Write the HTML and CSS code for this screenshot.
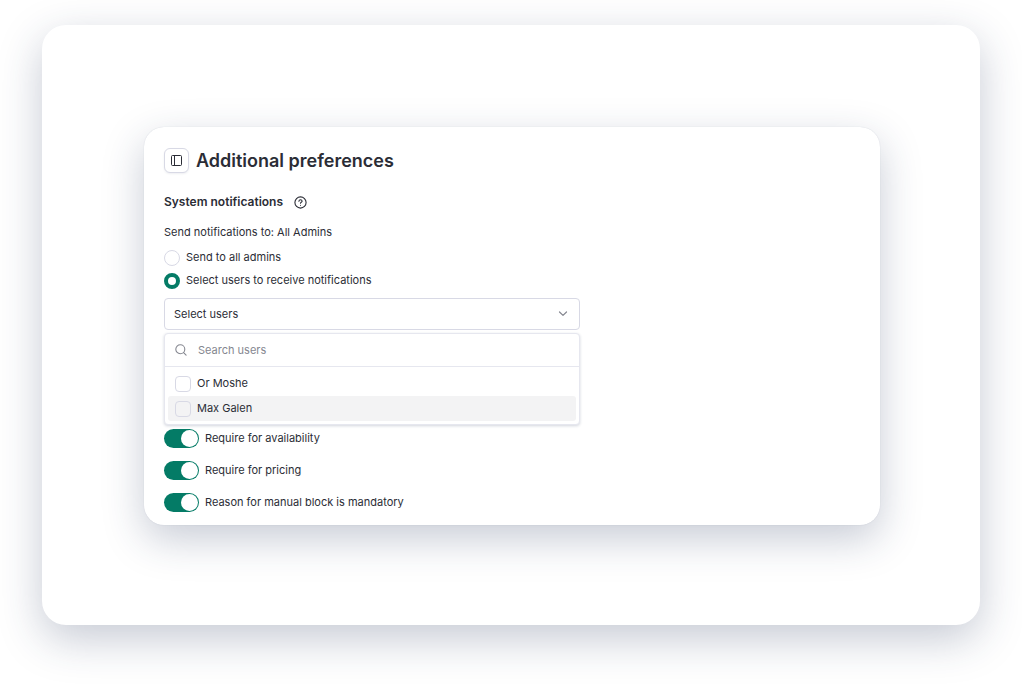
FILE: index.html
```html
<!DOCTYPE html>
<html lang="en">
<head>
<meta charset="utf-8">
<meta name="viewport" content="width=device-width, initial-scale=1">
<title>Additional preferences</title>
<link rel="stylesheet" href="styles.css">
</head>
<body>
<div class="stage">
  <main class="panel">
    <header class="panel-header">
      <button class="icon-button" type="button" aria-label="Toggle sidebar">
        <svg width="13" height="13" viewBox="0 0 13 13" fill="none" stroke="currentColor" stroke-width="1"><rect x="1.5" y="1.5" width="10" height="10" rx="1"/><path d="M4.5 1.5v10"/></svg>
      </button>
      <h1 class="title">Additional preferences</h1>
    </header>

    <div class="section-heading">
      <h2 class="subtitle">System notifications</h2>
      <svg class="help" width="13" height="13" viewBox="0 0 13 13" fill="none" stroke="currentColor" stroke-width="1.1" stroke-linecap="round" stroke-linejoin="round"><circle cx="6.5" cy="6.5" r="5.6"/><path d="M4.9 5.3c.1-1 .7-1.5 1.6-1.5s1.6.6 1.6 1.4c0 1-1.6 1.1-1.6 2M6.5 9.2v.1"/></svg>
    </div>

    <p class="summary">Send notifications to: All Admins</p>

    <div class="radio-list">
      <label class="choice"><input class="radio" type="radio" name="recipients"><span>Send to all admins</span></label>
      <label class="choice"><input class="radio" type="radio" name="recipients" checked><span>Select users to receive notifications</span></label>
    </div>

    <div class="picker">
      <div class="select-box">
        <select class="select" aria-label="Users"><option>Select users</option></select>
        <svg class="chevron" width="10" height="6" viewBox="0 0 10 6" fill="none" stroke="currentColor" stroke-width="1.2" stroke-linecap="round" stroke-linejoin="round"><path d="M1.5 1 5 4.4 8.5 1"/></svg>
      </div>
      <div class="menu">
        <div class="search">
          <svg width="12" height="12" viewBox="0 0 12 12" fill="none" stroke="currentColor" stroke-width="1.1" stroke-linecap="round"><circle cx="5.3" cy="5.3" r="4.5"/><path d="m8.6 8.6 2.5 2.5"/></svg>
          <input class="search-input" type="text" placeholder="Search users" aria-label="Search users">
        </div>
        <div class="options">
          <label class="option"><input class="checkbox" type="checkbox"><span>Or Moshe</span></label>
          <label class="option option-active"><input class="checkbox" type="checkbox"><span>Max Galen</span></label>
        </div>
      </div>
    </div>

    <div class="toggle-list">
      <label class="choice"><input class="toggle" type="checkbox" role="switch" checked><span>Require for availability</span></label>
      <label class="choice"><input class="toggle" type="checkbox" role="switch" checked><span>Require for pricing</span></label>
      <label class="choice"><input class="toggle" type="checkbox" role="switch" checked><span>Reason for manual block is mandatory</span></label>
    </div>
  </main>
</div>
</body>
</html>
```
FILE: styles.css
```css
* { box-sizing: border-box; }

:root {
  --ink: #2b2d36;
  --line: #d8d9e5;
  --green: #047b66;
}

body {
  margin: 0;
  padding: 25px 42px 59px;
  background: #fff;
  color: var(--ink);
  font: 11px/16px Inter, "Liberation Sans", sans-serif;
}

input, select, button { margin: 0; font: inherit; color: inherit; }

.stage {
  padding: 102px 100px 100px 102px;
  border-radius: 24px;
  background: #fff;
  box-shadow: 0 14px 44px rgba(35, 50, 90, 0.26);
}

.panel {
  padding: 21px 20px 13px;
  border-radius: 20px;
  background: #fff;
  box-shadow: 0 0 1px rgba(35, 50, 90, 0.2), 0 14px 40px rgba(35, 50, 90, 0.25);
}

.panel-header { display: flex; align-items: center; gap: 7px; }

.icon-button {
  display: grid;
  place-items: center;
  width: 25px;
  height: 25px;
  padding: 0;
  border: 1px solid var(--line);
  border-radius: 6px;
  background: #fff;
  box-shadow: 0 1px 2px rgba(35, 50, 90, 0.08);
}

.title { margin: 0; font-size: 18px; line-height: 24px; font-weight: 600; }

.section-heading { display: flex; align-items: center; gap: 11px; margin-top: 21px; }
.subtitle { margin: 0; font-size: 12px; line-height: 16px; font-weight: 600; }
.summary { margin: 14px 0 0; }

.radio-list { display: grid; gap: 7px; margin-top: 10px; }
.choice { display: flex; align-items: center; gap: 6px; line-height: 14px; }
.choice > span, .option > span { padding-bottom: 2px; }

.radio {
  appearance: none;
  width: 16px;
  height: 16px;
  border: 1px solid var(--line);
  border-radius: 50%;
  background: #fff;
}
.radio:checked { border: 4px solid var(--green); }

.picker { max-width: 416px; margin-top: 9px; }

.select-box { display: grid; align-items: center; }
.select-box > * { grid-area: 1 / 1; }
.select {
  appearance: none;
  width: 100%;
  height: 32px;
  padding: 0 32px 0 9px;
  border: 1px solid var(--line);
  border-radius: 4px;
  background: #fff;
}
.chevron { justify-self: end; margin-right: 12px; color: #858790; pointer-events: none; }

.menu {
  margin-top: 3px;
  border: 1px solid #e6e7ef;
  border-radius: 4px;
  background: #fff;
  box-shadow: 0 1px 3px rgba(35, 50, 90, 0.2);
}
.search {
  display: flex;
  align-items: center;
  gap: 11px;
  height: 33px;
  padding: 0 10px;
  border-bottom: 1px solid #e6e7ef;
  color: #858790;
}
.search-input { flex: 1; min-width: 0; padding: 0; border: 0; outline: 0; background: none; }
.search-input::placeholder { color: #858790; opacity: 1; }

.options { padding: 4px 3px 3px; }
.option { display: flex; align-items: center; gap: 6px; height: 25px; padding: 0 7px; border-radius: 3px; }
.option-active { background: #f3f3f4; }
.checkbox {
  appearance: none;
  width: 16px;
  height: 16px;
  border: 1px solid var(--line);
  border-radius: 4px;
}

.toggle-list { display: grid; gap: 13px; margin-top: 4px; }
.toggle {
  appearance: none;
  display: flex;
  align-items: center;
  justify-content: flex-end;
  width: 35px;
  height: 19px;
  padding: 1px;
  border-radius: 10px;
  background: var(--green);
}
.toggle::before { content: ""; width: 17px; height: 17px; border-radius: 50%; background: #fff; }
.toggle:not(:checked) { justify-content: flex-start; background: var(--line); }
```
